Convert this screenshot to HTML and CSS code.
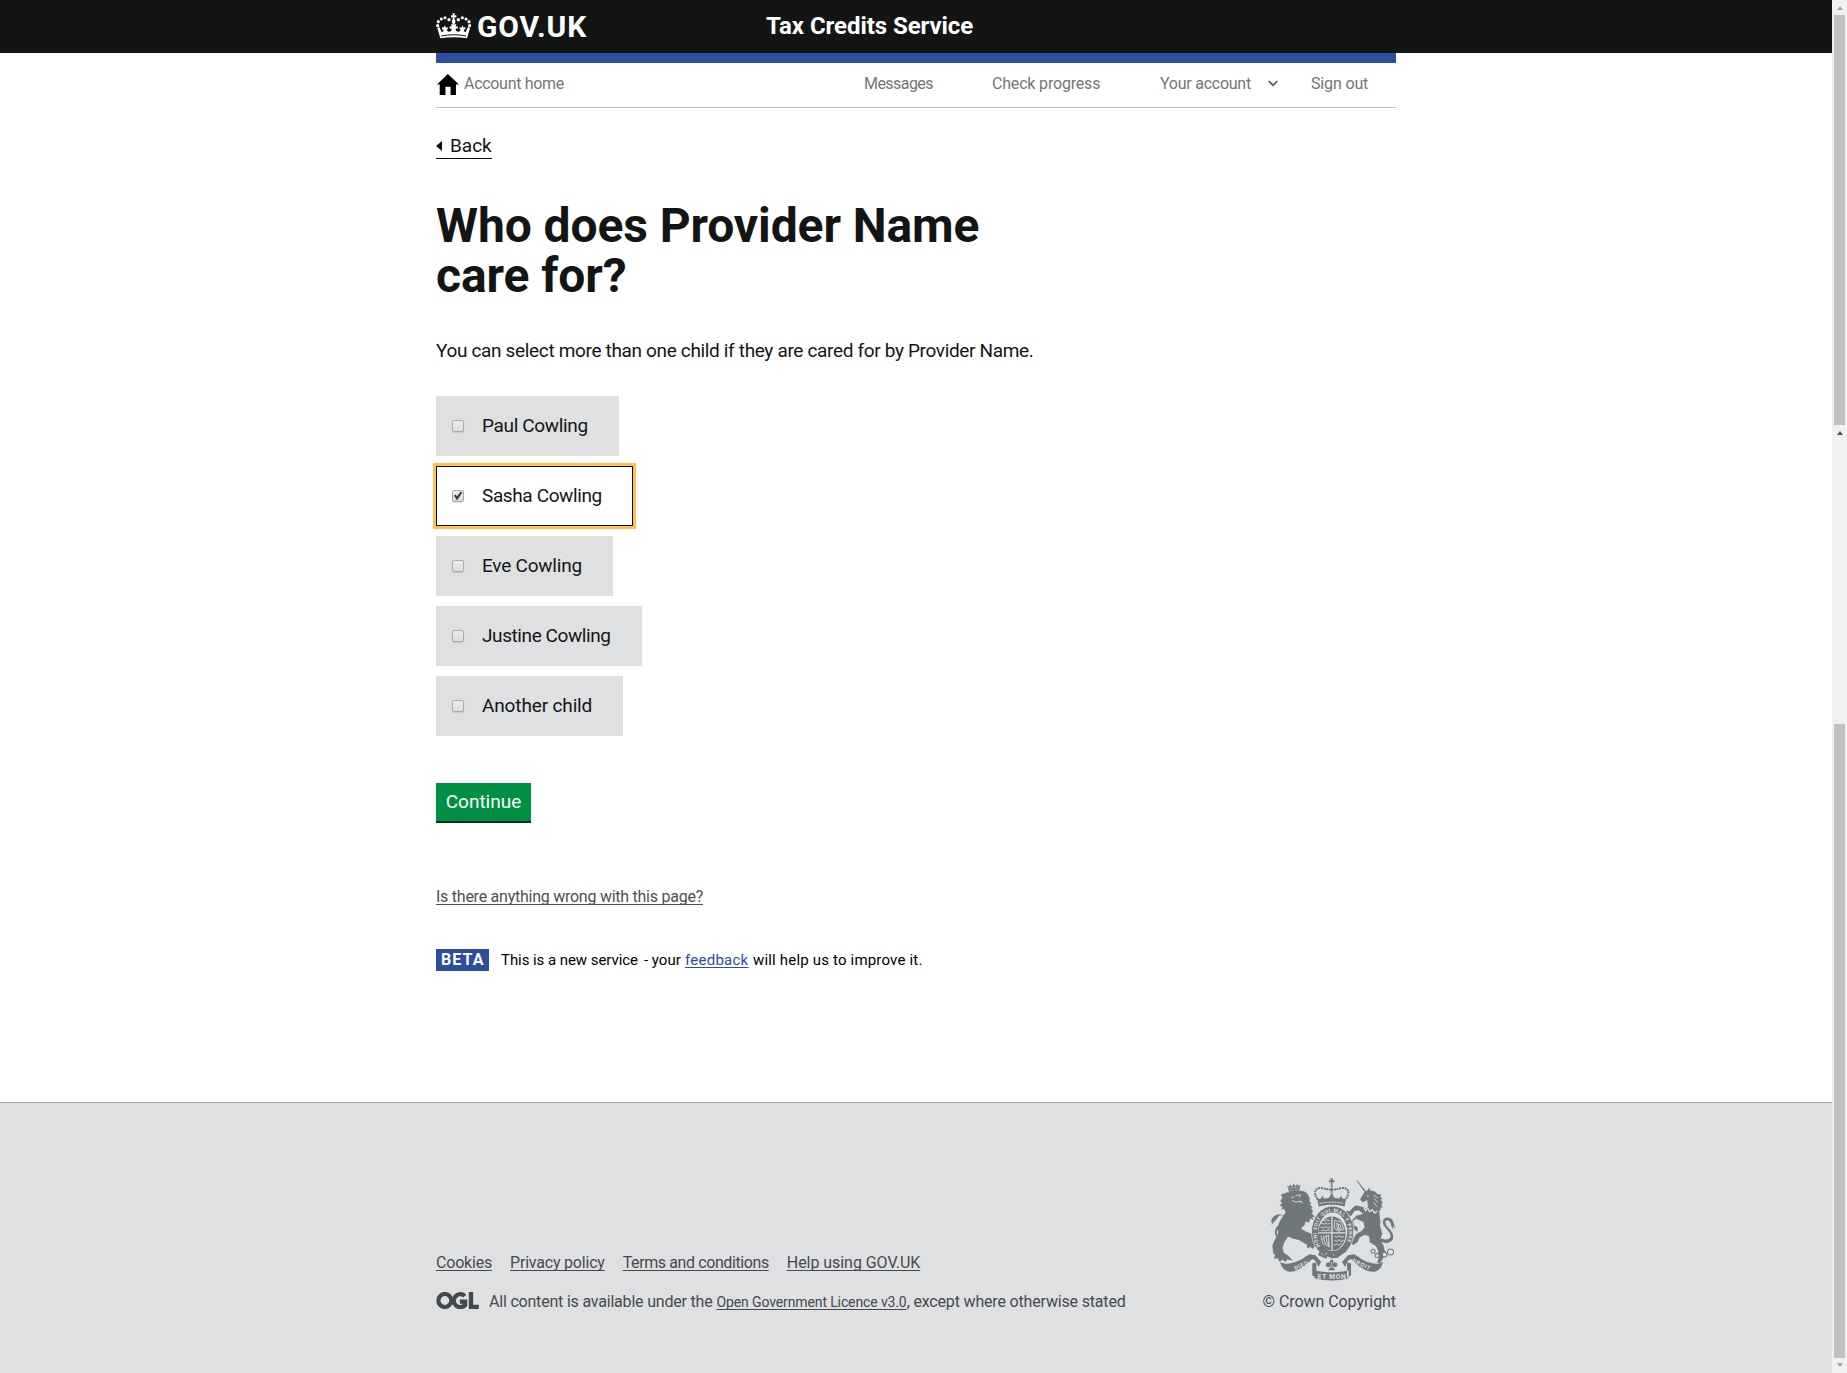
FILE: index.html
```html
<!DOCTYPE html>
<html lang="en">
<head>
<meta charset="utf-8">
<title>Who does Provider Name care for?</title>
<link rel="stylesheet" href="styles.css">
</head>
<body>
<div class="page">
  <header class="masthead">
    <div class="wrap masthead-inner">
      <a class="logo" href="#">
        <svg class="crown" viewBox="30 38 105 78" width="35" height="26" fill="#fff">
          <path d="M79 39h8l-2 6h6v7l-6-2 2 9c3 5 2 9-4 14-6-5-7-9-4-14l2-9-6 2v-7h6z"/>
          <circle cx="69" cy="58" r="5"/><circle cx="57" cy="52" r="4.600"/><circle cx="46" cy="56" r="4.600"/><circle cx="37" cy="64" r="4.800"/><circle cx="35" cy="76" r="5"/>
          <circle cx="97" cy="58" r="5"/><circle cx="109" cy="52" r="4.600"/><circle cx="120" cy="56" r="4.600"/><circle cx="129" cy="64" r="4.800"/><circle cx="131" cy="76" r="5"/>
          <path d="M43 114L34 84l6-4 7 16c5-1 6-5 5-9l-4 1v-8l5 2 3-7 4 7 5-2v8l-4-1c2 8 9 9 14 5 3-3 2-6 1-8l-5 2v-9l6 2-2-7h16l-2 7 6-2v9l-5-2c-1 2-2 5 1 8 5 4 12 3 14-5l-4 1v-8l5 2 4-7 3 7 5-2v8l-4-1c-1 4 0 8 5 9L126 80l6 4-9 30C98 110 68 110 43 114z"/>
          <path d="M46 107c24-5 50-5 74 0" fill="none" stroke="#131515" stroke-width="3"/>
        </svg>
        <span class="govuk">GOV.UK</span>
      </a>
      <a class="service" href="#">Tax Credits Service</a>
    </div>
  </header>
  <div class="wrap">
    <nav class="account">
      <a class="home" href="#">
        <svg viewBox="34 221 65 62" width="22" height="21"><path d="M66 221l33 31h-9v31H74v-24H59v24H42v-31h-8z"/></svg>
        <span class="t n1">Account home</span>
      </a>
      <a class="m2" href="#"><span class="t n2">Messages</span></a>
      <a class="m3" href="#"><span class="t n3">Check progress</span></a>
      <a class="m4" href="#"><span class="t n4">Your account</span></a>
      <svg class="chev" viewBox="0 0 10 7" width="10" height="7"><path d="M.7 1L5 5.300 9.300 1" fill="none" stroke="#555" stroke-width="1.700"/></svg>
      <a class="m5" href="#"><span class="t n5">Sign out</span></a>
    </nav>
    <main>
      <a class="back" href="#"><svg viewBox="0 0 6 10" width="6" height="10"><path d="M6 0v10L0 5z" fill="#0b0c0c"/></svg><span class="t">Back</span></a>
      <h1>Who does Provider Name<br>care for?</h1>
      <p class="intro">You can select more than one child if they are cared for by Provider Name.</p>
      <div class="choices">
        <label class="choice c1"><span class="box"></span><span class="t">Paul Cowling</span></label>
        <label class="choice c2 selected"><span class="box"><svg viewBox="0 0 12 12" width="12" height="12"><path d="M2 5.600l1.700-1L5 6.400 8.400 1.700l1.900.9L5.600 9.700H4.500z" fill="#3c3c3c"/></svg></span><span class="t">Sasha Cowling</span></label>
        <label class="choice c3"><span class="box"></span><span class="t">Eve Cowling</span></label>
        <label class="choice c4"><span class="box"></span><span class="t">Justine Cowling</span></label>
        <label class="choice c5"><span class="box"></span><span class="t">Another child</span></label>
      </div>
      <button class="continue">Continue</button>
      <div class="report"><a class="t" href="#">Is there anything wrong with this page?</a></div>
      <div class="beta">
        <strong class="tag">BETA</strong>
        <span class="beta-text"><span class="t b1">This is a new service</span><span class="t b2">- your</span><a class="t b3" href="#">feedback</a><span class="t b4">will help us to improve it.</span></span>
      </div>
    </main>
  </div>
  <footer>
    <div class="wrap foot">
      <div class="foot-main">
        <div class="links">
          <a class="t f1" href="#">Cookies</a><a class="t f2" href="#">Privacy policy</a><a class="t f3" href="#">Terms and conditions</a><a class="t f4" href="#">Help using GOV.UK</a>
        </div>
        <div class="licence">
          <svg class="ogl" viewBox="0 0 128 51" width="43" height="17" fill="none" stroke="#45484a" stroke-width="12.500">
            <circle cx="26" cy="25.500" r="19.500"/><path d="M86 12A19.500 19.500 0 1 0 87 39V29H71"/><path d="M104.500 0v44.500H128" stroke-width="13"/>
          </svg>
          <span class="t g1">All content is available under the</span><a class="t g2" href="#">Open Government Licence v3.0</a><span class="t g3">, except where otherwise stated</span>
        </div>
      </div>
      <div class="crest-col">
        <svg class="crest" viewBox="62 38 376 308" width="126" height="103" fill="#6f777b">
          <!-- royal crown -->
          <path d="M242 39h8l-2 6h6v7l-6-2 1 8h-6l1-8-6 2v-7h6z"/>
          <path d="M205 103c-16-22-8-36 8-35 14 1 22 5 33 5s19-4 33-5c16-1 24 13 8 35M246 60v42" fill="none" stroke="#6f777b" stroke-width="6" stroke-dasharray="6 2"/>
          <path d="M203 101l11-2 4-9 5 9 14-1 9-13 9 13 14 1 5-9 4 9 11 2-4 22c-26-7-52-7-78 0z"/>
          <path d="M210 114c24-5 48-5 72 0" fill="none" stroke="#dee0e2" stroke-width="3" stroke-dasharray="6 3"/>
          <!-- lion -->
          <path d="M113 60l5 4 4-7 5 7 5-9 6 8 5-7 4 6 6-3-5 20-29 3z"/>
          <path d="M117 68l31-3M120 76l27-3" stroke="#dee0e2" stroke-width="2" stroke-dasharray="4 2"/>
          <path d="M117 81c9-4 22-5 34-4 13 0 21 5 25 14l4 11-5-1 9 13-5 1 9 12-6-1 8 13-5 4 10 12-10-2 5 9-9-4-3 12-10-3-5 13-10 9c9 8 22 12 35 18l4 9 8 7-2 12 4 11-7-5-6 8-7-6-8 4-1-10-26-15c-13-2-23-6-31-10l-12 17-6 17 4 16 15 10 10 12-14-4-5 8-9-6-9 5-4-10-11 1 3-9-6-7-2-23 7-17 10-14-2-23 8-20 16-24-4-11-8 1 4-10-8 1 6-12-6-2 7-11-5-8 9-4z" stroke="#6f777b" stroke-width="2"/>
          <path d="M125 95l9 1M138 91l15-3-4 8M128 105l11 5 17-2M151 105l8 9" stroke="#dee0e2" stroke-width="2.500" fill="none"/>
          <path d="M104 220C80 226 70 202 80 187c9-14 29-22 20-34-6-8-14 0-19 8-5 7-10 9-15 19l3-14-5 6c2-15 11-24 22-25 12-2 22 8 18 20-5 14-19 18-22 32-2 9 6 13 22 10z"/>
          <!-- unicorn -->
          <path d="M321 45l27 33 6-1 3-8 5 8c10-1 17 4 21 10l10 1-3 6 6 5-4 5 6 8-5 4 4 10-7-2 2 10-5-1 1 15 3 21-4 25-10 14 8 13 8 3 4 20 9 15-10 3-3 14-10-6 4-14-7-15-18-14-4-16-13-4-15 7-8 16-11 7-7-3 15-27 17-10 10-12-4-16-23-10-10 6 3 16 10 4 1 12-11-7-13-22-10-7-3-9 11 2 2 8 8 4 13-14 22-6-14-12-14 1-10 16-9-3-5-11 10 2 6-8 12-10 23 5 9 5 6-9-3-20-14 8-7-8 13-22z" stroke="#6f777b" stroke-width="2"/>
          <path d="M390 178l7 27-6 20 10 14 5 28-15 26-9-2 8-26-10-22-22-14z"/>
          <path d="M343 126l4 10 7-8 6 11 8-7 6 11 8-6" fill="none" stroke="#dee0e2" stroke-width="4"/>
          <path d="M351 91l7 2M371 89l14 9M372 99l13 12M371 111l12 13" stroke="#dee0e2" stroke-width="2.500"/>
          <path d="M393 218c22 9 34 0 27-14-7-15-23-23-21-37 2-11 15-15 25-7 9 7 7 18 13 29l-8-7 1 10c-8-10-6-25-15-27-8-2-11 4-7 11 6 12 21 20 22 36 1 18-18 25-37 17z"/>
          <g fill="#dee0e2" stroke="#6f777b" stroke-width="3"><circle cx="370" cy="257" r="6"/><circle cx="382" cy="270" r="6"/><circle cx="404" cy="267" r="7"/><circle cx="422" cy="259" r="9"/></g>
          <!-- garter and shield -->
          <ellipse cx="249" cy="199" rx="53" ry="67" fill="#dee0e2" stroke="#6f777b" stroke-width="19"/>
          <ellipse cx="249" cy="199" rx="63.500" ry="77.500" fill="none" stroke="#dee0e2" stroke-width="2"/>
          <path id="garter" d="M212 241A48 62 0 1 1 286 241" fill="none"/>
          <text class="motto garter-text"><textPath href="#garter" textLength="242">HONI SOIT QUI MAL Y PENSE</textPath></text>
          <ellipse cx="247" cy="204" rx="41" ry="51"/>
          <path d="M247 154v100M206 202h82" stroke="#dee0e2" stroke-width="4"/>
          <g fill="none" stroke="#dee0e2" stroke-width="2.600">
            <path d="M214 173l10 3 5-5 4 5 9-2M213 185l10 2 5-5 5 6 9-3M215 196l8-3 6 4 6-5 8 3M222 166l8-3 10 3"/>
            <path d="M254 212l9 3 5-5 6 5 9-2M254 225l10 2 5-5 4 6 9-3M253 239l9-4 6 4 8-5"/>
            <path d="M255 165l18 4 10 22-17 6-12-8zM261 173l11 6 3 11-12 1zM266 176l2 18"/>
            <path d="M214 211l5 22 22 12M222 210l3 21 16 8M230 209l1 19 10 5M215 224l14-12 11-2M237 210v34"/>
          </g>
          <path d="M215 253l-5 14 18 8 6-13 11 11 17 1 14-15-8-8M231 252v14l19 10" fill="none" stroke="#6f777b" stroke-width="7"/>
          <path d="M228 262l4 4M250 267l4 3" stroke="#dee0e2" stroke-width="3"/>
          <!-- scroll -->
          <path d="M92 289c18 10 36 3 46 0 18-5 30-17 42-23l17 3 18 20-9 15-7-16c-3-6-8-8-12-7-22 22-44 38-66 37-13-1-23-8-29-29zM400 289c-18 10-36 3-46 0-18-5-28-17-42-23l-17 3-18 20 9 15 7-16c3-6 8-8 12-7 22 22 42 38 66 37 13-1 23-8 29-29z"/>
          <path d="M195 314c33 8 69 8 102 0v24c-33 9-69 9-102 0zM188 294l12-4v48l-12-9zM304 294l-12-4v48l12-9z"/>
          <text class="motto" x="137" y="314" textLength="44" transform="rotate(-24 137 314)">DIEU</text>
          <text class="motto big" x="204" y="340" textLength="84">ET MON</text>
          <text class="motto" x="306" y="289" textLength="58" transform="rotate(25 306 289)">DROIT</text>
          <path d="M246 281c8 7 6 12 3 16 4-10 16-7 14 2-2 7-9 7-13 6l7 9h-22l7-9c-5 1-12 0-13-6-1-9 10-12 14-2-4-4-5-10 3-16z"/>
          <path d="M237 304h18M246 289v13" stroke="#dee0e2" stroke-width="2"/>
        </svg>
        <span class="t crown-c">© Crown Copyright</span>
      </div>
    </div>
  </footer>
</div>
<div class="bars">
  <div class="bar bar-a"><i class="up"></i><b></b></div>
  <div class="bar bar-b"><i class="up dark"></i><b></b><i class="down"></i></div>
</div>
</body>
</html>
```
FILE: styles.css
```css
* { box-sizing: border-box; }
body {
  margin: 0;
  display: flex;
  height: 1373px;
  overflow: hidden;
  background: #fff;
  color: #131515;
  font-family: Roboto, "Liberation Sans", sans-serif;
}
a { color: inherit; text-decoration: none; }
svg { display: block; flex: none; }
.page { width: 1832px; display: flex; flex-direction: column; }
.wrap { width: 960px; margin: 0 auto; }
.t { white-space: nowrap; text-decoration-skip-ink: none; }

.masthead { height: 53px; background: #131515; color: #fff; }
.masthead-inner { display: flex; height: 53px; }
.logo { display: flex; width: 330px; padding-top: 13px; }
.govuk { margin-left: 6px; font-size: 30px; font-weight: 700; line-height: 28px; letter-spacing: .9px; }
.service { font-size: 24px; font-weight: 700; line-height: 52px; letter-spacing: -.06px; }

.account {
  display: flex;
  height: 55px;
  border-top: 10px solid #2d4da1;
  border-bottom: 1px solid #bfc1c3;
  color: #6f777b;
  font-size: 16px;
  line-height: 42px;
}
.home { display: flex; width: 428px; padding-left: 1px; }
.home svg { margin: 11px 5px 0 0; }
.m2 { width: 128px; }
.m3 { width: 168px; }
.m4 { width: 108px; }
.chev { margin: 17px 33px 0 0; }
.n1 { letter-spacing: -.3px; }
.n2 { letter-spacing: -.55px; }
.n3 { letter-spacing: -.18px; }
.n4 { letter-spacing: -.25px; }
.n5 { letter-spacing: -.15px; }

main { height: 994px; padding-top: 25px; }
.back {
  display: flex;
  align-items: center;
  width: 56px;
  height: 26px;
  border-bottom: 1px solid #0b0c0c;
  font-size: 19px;
}
.back svg { margin-right: 8px; }
h1 { margin: 42px 0 0; font-size: 48px; line-height: 50px; font-weight: 700; letter-spacing: -.1px; }
.intro { margin: 37px 0 33px; font-size: 19px; line-height: 25px; letter-spacing: -.34px; }
.choices { display: flex; flex-direction: column; gap: 10px; }
.choice {
  display: flex;
  align-items: center;
  height: 60px;
  padding-left: 16px;
  background: #dee0e2;
  font-size: 19px;
}
.choice .t { margin-bottom: 2px; }
.c1 { width: 183px; letter-spacing: -.34px; }
.c2 { width: 197px; letter-spacing: -.38px; }
.c3 { width: 177px; letter-spacing: -.22px; }
.c4 { width: 206px; letter-spacing: -.41px; }
.c5 { width: 187px; letter-spacing: -.14px; }
.selected { padding-left: 15px; background: #fff; border: 1px solid #0b0c0c; box-shadow: 0 0 0 3px #ffc04d; }
.box {
  width: 12px;
  height: 12px;
  margin-right: 18px;
  border: 1px solid #aaa;
  border-radius: 2px;
  background: linear-gradient(#eee, #dcdcdc);
  box-shadow: 0 1px 1px rgba(0, 0, 0, .12);
}
.box svg { margin: -1px; }
.continue {
  display: block;
  width: 95px;
  height: 38px;
  margin: 47px 0 0;
  padding: 0;
  border: 0;
  background: #008f43;
  box-shadow: 0 2px 0 #003618;
  color: #fff;
  font: 19px/38px Roboto, "Liberation Sans", sans-serif;
}
.report { margin-top: 64px; height: 24px; font-size: 16px; line-height: 24px; letter-spacing: -.25px; color: #4b5054; }
.report a, .links a, .g2, .b3 { text-decoration: underline; text-underline-offset: 2px; text-decoration-thickness: 1px; }
.beta { display: flex; margin-top: 40px; height: 22px; color: #000; }
.tag { width: 53px; margin-right: 12px; padding-left: 5px; background: #2d4da1; color: #fff; font-size: 16px; line-height: 21px; letter-spacing: 1.1px; }
.beta-text { display: flex; font-size: 15px; line-height: 23px; }
.b1 { width: 143px; letter-spacing: -.06px; }
.b2 { width: 41px; }
.b3 { width: 64px; margin-right: 4px; color: #2d4da1; letter-spacing: .25px; }
.b4 { letter-spacing: .18px; }

footer { flex: 1; border-top: 1px solid #a1acb2; background: #dee0e2; color: #454a4d; font-size: 16px; }
.foot { display: flex; justify-content: space-between; padding-top: 75px; }
.foot-main { padding-top: 73px; }
.links { display: flex; gap: 18px; height: 24px; line-height: 24px; }
.f1, .f2 { letter-spacing: -.2px; }
.f3 { letter-spacing: -.4px; }
.f4 { letter-spacing: -.05px; }
.licence { display: flex; height: 24px; margin-top: 15px; line-height: 24px; }
.ogl { margin: 2px 10px 0 0; }
.g1 { width: 227.500px; letter-spacing: -.2px; }
.g2 { font-size: 14px; letter-spacing: -.12px; }
.g3 { letter-spacing: -.17px; }
.crest-col { display: flex; flex-direction: column; align-items: flex-end; }
.crest { margin-bottom: 9px; }
.crown-c { line-height: 24px; letter-spacing: -.06px; }
.motto { fill: #dee0e2; font: 700 17px Roboto, sans-serif; letter-spacing: 0; }
.motto.big { font-size: 20px; }
.motto.garter-text { font-size: 15px; }

.bars { width: 15px; background: #f1f1f1; }
.bar { display: flex; flex-direction: column; align-items: center; }
.bar-a { height: 425px; }
.bar-b { height: 948px; }
.bar b { width: 11px; background: #c1c1c1; }
.bar-a b { height: 410px; }
.bar-b b { height: 634px; }
.up, .down { width: 0; border: 3.500px solid transparent; }
.up { margin: 6px 0 5px; border-top: 0; border-bottom: 4px solid #a3a3a3; }
.up.dark { margin: 6px 0 289px; border-bottom-color: #505050; }
.down { margin-top: 5px; border-bottom: 0; border-top: 4px solid #a3a3a3; }
```
